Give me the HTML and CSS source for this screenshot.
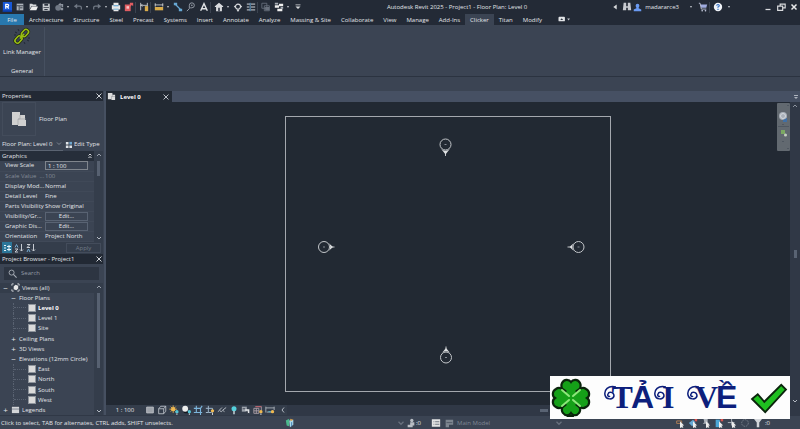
FILE: index.html
```html
<!DOCTYPE html>
<html lang="en">
<head>
    <meta charset="UTF-8">
    <meta name="viewport" content="width=device-width, initial-scale=1.0">
    <title>Autodesk Revit 2025 - Project1 - Floor Plan: Level 0</title>
    <link rel="stylesheet" href="styles.css">
</head>
<body>
    <header class="titlebar">
        <div class="quick-access">
            <button class="tool" aria-label="Revit"><svg viewBox="0 0 12 12"><path fill="#1858d8" d="M1 0h11v12H1z"/><path fill="#0b3aa0" d="M1 10h11v2H1z"/><path fill="none" stroke="#fff" stroke-width="1.5" d="M4.500 8V2.700h2a1.400 1.400 0 0 1 0 2.900h-2M6.500 5.600L8 8"/></svg></button>
            <button class="tool" aria-label="Home"><svg viewBox="0 0 12 12"><path fill="#aeb4bc" d="M2 2h8v8H2z"/><path stroke="#2a313d" d="M2 4.500h8M5 5v5M6 7h3"/></svg></button>
            <button class="tool" aria-label="Open"><svg viewBox="0 0 12 12"><path fill="#d5d7da" d="M2 2h3l1 1h4v2H4L2 9z"/><path fill="#efefef" d="M4.500 5.500H12L10 10H2z"/></svg></button>
            <button class="tool" aria-label="Save"><svg viewBox="0 0 12 12"><path fill="#c9ccd0" d="M2 2h8.500v8.500H2z"/><path fill="#303743" d="M4 2.500h4.500v2H4zM3 6h6.500v1H3zM4 8.500h4v1H4z"/></svg></button>
            <button class="tool" aria-label="Synchronize"><svg viewBox="0 0 12 12"><circle cx="5" cy="7" r="3.500" fill="#707884"/><path fill="#8c939e" d="M5 3l3-2v1.500h3V6H9V4H8v1zM8 7h3v3H8z"/></svg></button>
            <span class="caret"></span>
            <button class="tool" aria-label="Undo"><svg viewBox="0 0 12 12"><path fill="none" stroke="#707884" stroke-width="1.500" d="M10 9V6.500Q10 5 8 5H4"/><path fill="#707884" d="M5 2v6L1 5z"/></svg></button>
            <span class="caret"></span>
            <button class="tool" aria-label="Redo"><svg viewBox="0 0 12 12"><path fill="none" stroke="#707884" stroke-width="1.500" d="M2 9V6.500Q2 5 4 5h4"/><path fill="#707884" d="M7 2v6l4-3z"/></svg></button>
            <span class="caret"></span>
            <button class="tool" aria-label="Print"><svg viewBox="0 0 12 12"><path fill="#e8e8e8" d="M3 1h6v3h2v5H9v2H3V9H1V4h2z"/><path fill="#4d9bd0" d="M3 4h6v1H3zM3 8h6v1H3z"/></svg></button>
            <button class="tool" aria-label="Export PDF"><svg viewBox="0 0 12 12"><path fill="#e05d62" d="M1 3h7v8H1z"/><path fill="#f4c5c7" d="M3 5h3v3H3z"/><path fill="#e05d62" d="M7 1h4v4L9.500 3.500 7 6z"/></svg></button>
            <span class="sep"></span>
            <button class="tool" aria-label="Measure"><svg viewBox="0 0 12 12"><path fill="none" stroke="#d2d5d9" d="M2 1v9M10 1v5M2 4h8M4 2.500L2.500 4 4 5.500"/><path fill="#d9ac4b" d="M7 5h4v6H7z"/></svg></button>
            <span class="sep"></span>
            <button class="tool" aria-label="Aligned dimension"><svg viewBox="0 0 12 12"><path stroke="#d2d5d9" d="M1 3.500h10M1.500 1.500v4M10.500 1.500v4"/><path fill="#d9ac4b" d="M1 6h10v4H1z"/></svg></button>
            <span class="caret"></span>
            <button class="tool" aria-label="Tag"><svg viewBox="0 0 12 12"><path stroke="#67a8d4" stroke-width="1.500" d="M3 3l6 6"/><path fill="#67a8d4" d="M1 1h4v3H1zM7 8h4v3H7z"/></svg></button>
            <button class="tool" aria-label="Detail"><svg viewBox="0 0 12 12"><path fill="none" stroke="#9299a4" stroke-width="1.200" d="M1 11l3-3V4a3 3 0 1 1 3 3H5"/><circle cx="7" cy="4" r="1" fill="#9299a4"/></svg></button>
            <button class="tool" aria-label="Text"><svg viewBox="0 0 12 12"><path fill="none" stroke="#e0e2e4" stroke-width="1.700" d="M2 10.500L6 2l4 8.500M3.500 8h5"/></svg></button>
            <span class="sep"></span>
            <button class="tool" aria-label="3D view"><svg viewBox="0 0 12 12"><path fill="#d9dbde" d="M1 5l5-4 5 4v1H9.500v5h-7V6H1z"/><path fill="#353c49" d="M5 7h2v4H5z"/></svg></button>
            <span class="caret"></span>
            <button class="tool" aria-label="Section"><svg viewBox="0 0 12 12"><circle cx="6" cy="5.500" r="3" fill="none" stroke="#d9dbde" stroke-width="1.300"/><path fill="#d9dbde" d="M1 5.500l2-2v4zM11 5.500l-2-2v4zM4 9h4l-2 3z"/></svg></button>
            <button class="tool" aria-label="Thin lines"><svg viewBox="0 0 12 12"><path stroke="#d0d3d7" stroke-width="1.200" d="M1 2.500h4M6 2.500h5M1 6h3M6 6h5M1 9.500h4M6 9.500h5"/><path stroke="#5f9dc9" stroke-width="1.200" d="M5 1v10"/></svg></button>
            <span class="sep"></span>
            <button class="tool" aria-label="Close inactive views"><svg viewBox="0 0 12 12"><path fill="none" stroke="#69717e" d="M1 1.500h6v6H1zM4 4.500h6v6H4z"/><path fill="#69717e" d="M5 6h5v4H5z"/></svg></button>
            <button class="tool" aria-label="Switch windows"><svg viewBox="0 0 12 12"><path fill="#f0f0f0" d="M1 4h5v3H1zM6 2h5v3H6zM4 8h6v3H4z"/><path fill="#aab0b8" d="M1 1h4v2H1zM8 6h3v2H8z"/></svg></button>
            <span class="caret"></span>
            <button class="tool" aria-label="Customize"><svg viewBox="0 0 12 12"><path fill="#d9dbde" d="M3 3h6v1H3zM3 5.500h6l-3 3z"/></svg></button>
        </div>
        <div class="title">Autodesk Revit 2025 - Project1 - Floor Plan: Level 0</div>
        <div class="account">
            <svg class="icon" viewBox="0 0 12 12"><path fill="#d9dbde" d="M8 3v6L4 6z"/></svg>
            <button class="tool" aria-label="Search"><svg viewBox="0 0 12 12"><path fill="#c7cad0" d="M2 1h3v4h2V1h3l1 9H7V7H5v3H1z"/></svg></button>
            <button class="user"><svg viewBox="0 0 12 12"><circle cx="6" cy="3.500" r="2.500" fill="#6a9af2"/><path fill="#6a9af2" d="M4.500 5h3v2L11 8.500V11H1V8.500L4.500 7z"/></svg>madararce3</button>
            <span class="caret"></span>
            <button class="tool" aria-label="Store"><svg viewBox="0 0 12 12"><path fill="#9fabe0" d="M3 3h8l-1 4H4z"/><path fill="none" stroke="#cdd2e6" d="M1 1.500h1.500L4 8.500h6"/><circle cx="5" cy="10.500" r="1" fill="#cdd2e6"/><circle cx="9" cy="10.500" r="1" fill="#cdd2e6"/></svg></button>
            <span class="sep"></span>
            <button class="tool" aria-label="Help"><svg viewBox="0 0 12 12"><circle cx="6" cy="6" r="5" fill="#f0f3f8"/><path fill="none" stroke="#2d6cc4" stroke-width="1.400" d="M4.500 4.500Q4.500 3 6 3t1.500 1.500Q7.500 5.500 6 6v1M6 8v1.500"/></svg></button>
            <span class="caret"></span>
        </div>
        <div class="window-buttons">
            <button class="tool" aria-label="Minimize"><svg viewBox="0 0 12 12"><path stroke="#d9dbde" stroke-width="1.500" d="M3 9h6"/></svg></button>
            <button class="tool" aria-label="Restore"><svg viewBox="0 0 12 12"><path fill="none" stroke="#d9dbde" stroke-width="1.400" d="M2 5h6v5H2zM5 5V2.500h6V7H8"/></svg></button>
            <button class="tool" aria-label="Close"><svg viewBox="0 0 12 12"><path stroke="#e8e9eb" stroke-width="1.800" d="M3 3l6 6M9 3L3 9"/></svg></button>
        </div>
    </header>

    <nav class="tabs">
        <a class="file" href="#">File</a>
        <a href="#">Architecture</a>
        <a href="#">Structure</a>
        <a href="#">Steel</a>
        <a href="#">Precast</a>
        <a href="#">Systems</a>
        <a href="#">Insert</a>
        <a href="#">Annotate</a>
        <a href="#">Analyze</a>
        <a href="#">Massing &amp; Site</a>
        <a href="#">Collaborate</a>
        <a href="#">View</a>
        <a href="#">Manage</a>
        <a href="#">Add-Ins</a>
        <a class="active" href="#">Clicker</a>
        <a href="#">Titan</a>
        <a href="#">Modify</a>
        <button class="ribbon-toggle" aria-label="Minimize ribbon"><svg viewBox="0 0 14 12"><rect x="1" y="3" width="7" height="5" rx="1" fill="#e2e4e7"/><path fill="#2a313d" d="M3 6.500h3l-1.500-2z"/><path fill="#c6c9ce" d="M10.500 5h3l-1.500 2z"/></svg></button>
    </nav>

    <section class="ribbon">
        <div class="ribbon-panel">
            <button class="link-manager">
                <svg viewBox="0 0 20 20"><g fill="none" stroke="#1e2618" stroke-width="3"><rect x="-4" y="-2.500" width="8" height="5" rx="2.500" transform="translate(6.500 12.500) rotate(-48)"/><rect x="-4" y="-2.500" width="8" height="5" rx="2.500" transform="translate(13 6) rotate(-48)"/></g><g fill="none" stroke="#9abf12" stroke-width="1.600"><rect x="-4" y="-2.500" width="8" height="5" rx="2.500" transform="translate(6.500 12.500) rotate(-48)"/><rect x="-4" y="-2.500" width="8" height="5" rx="2.500" transform="translate(13 6) rotate(-48)"/><path d="M8 11.500l4-4.500"/></g><path stroke="#202735" d="M6 2l1 2M3 5l2 1M2 8h2M13 17l-1-2M17 14l-2-1M18 11h-2"/></svg>
                <span>Link Manager</span>
            </button>
            <div class="panel-name">General</div>
        </div>
    </section>
    <div class="options-bar"></div>

    <main class="workspace">
        <aside class="sidebar">
            <section class="properties">
                <h2 class="palette-title">Properties <button class="close" aria-label="Close properties"><svg viewBox="0 0 8 8"><path stroke="#cfd2d7" d="M1.500 1.500l5 5M6.500 1.500l-5 5"/></svg></button></h2>
                <div class="type-selector">
                    <div class="thumb"><svg viewBox="0 0 18 18"><path fill="#d0d0d0" d="M2 2h8v3h5v5h1v6H8v-1H2z"/><path fill="none" stroke="#9a9da1" stroke-width=".6" d="M10 5v4H8v6M8 9h8"/></svg></div>
                    <span>Floor Plan</span>
                </div>
                <div class="filter-row">
                    <select class="filter" aria-label="Element filter"><option>Floor Plan: Level 0</option></select>
                    <svg class="chevron" viewBox="0 0 8 8"><path fill="none" stroke="#7f8793" d="M2 3l2 2 2-2"/></svg>
                    <button class="edit-type"><svg viewBox="0 0 8 8"><path fill="#dfe3e8" d="M1 1h3v3H1zM1 5h3v3H1zM5 5h3v3H5z"/><path fill="#6ea6ce" d="M5 1h3v3H5z"/></svg>Edit Type</button>
                </div>
                <div class="property-box">
                    <div class="property-list">
                        <h3 class="group-title">Graphics <svg viewBox="0 0 8 8"><path fill="none" stroke="#d5d8dc" d="M2.500 3.500L4 2l1.500 1.500M2.500 6L4 4.500 5.500 6"/></svg></h3>
                        <table class="property-table">
                            <tr><th><label for="scale">View Scale</label></th><td><input id="scale" type="text" value="1 : 100"></td></tr>
                            <tr class="muted"><th>Scale Value &nbsp;...</th><td>100</td></tr>
                            <tr><th>Display Mod...</th><td>Normal</td></tr>
                            <tr><th>Detail Level</th><td>Fine</td></tr>
                            <tr><th>Parts Visibility</th><td>Show Original</td></tr>
                            <tr><th>Visibility/Gr...</th><td><button class="edit">Edit...</button></td></tr>
                            <tr><th>Graphic Dis...</th><td><button class="edit">Edit...</button></td></tr>
                            <tr><th>Orientation</th><td>Project North</td></tr>
                        </table>
                    </div>
                    <div class="scroll">
                        <svg viewBox="0 0 8 8"><path fill="none" stroke="#9ba2ad" d="M2 5l2-2 2 2"/></svg>
                        <div class="scroll-track"><div class="scroll-thumb short"></div></div>
                        <svg viewBox="0 0 8 8"><path fill="none" stroke="#b3b9c2" d="M2 3l2 2 2-2"/></svg>
                    </div>
                </div>
                <div class="property-footer">
                    <button class="sort on" aria-label="Group"><svg viewBox="0 0 10 10"><path stroke="#e7f2f8" d="M2 2.500h2M2 5h2M2 7.500h2M5 3.500h4M5 6.500h4M7 2v6"/></svg></button>
                    <button class="sort" aria-label="Sort ascending"><svg viewBox="0 0 10 10"><path fill="none" stroke="#75abd0" d="M1 4.500l1.500-3L4 4.500"/><path fill="none" stroke="#c5cad1" d="M1 6h3L1 9h3M7.500 1v7M6 6.500L7.500 8 9 6.500"/></svg></button>
                    <button class="sort" aria-label="Sort descending"><svg viewBox="0 0 10 10"><path fill="none" stroke="#c5cad1" d="M1 1.500h3L1 4.500h3M7.500 1v7M6 6.500L7.500 8 9 6.500"/><path fill="none" stroke="#75abd0" d="M1 9l1.500-3L4 9"/></svg></button>
                    <button class="apply" disabled>Apply</button>
                </div>
            </section>

            <section class="browser">
                <h2 class="palette-title">Project Browser - Project1 <button class="close" aria-label="Close browser"><svg viewBox="0 0 8 8"><path stroke="#cfd2d7" d="M1.500 1.500l5 5M6.500 1.500l-5 5"/></svg></button></h2>
                <label class="search"><svg viewBox="0 0 10 10"><circle cx="4" cy="4" r="2.800" fill="none" stroke="#aab0b9"/><path stroke="#aab0b9" stroke-width="1.200" d="M6 6l3.500 3.500"/></svg><input type="text" placeholder="Search" aria-label="Search"></label>
                <div class="tree-box">
                    <ul class="tree">
                        <li class="root"><i>−</i><svg viewBox="0 0 10 10"><path fill="none" stroke="#d5d8dc" d="M1 3V1h2M7 1h2v2M9 7v2H7M3 9H1V7"/><path fill="#e8e8e8" d="M3 4l2-2 3 1v3L6 8 3 7z"/></svg>Views (all)</li>
                        <li class="branch"><i>−</i>Floor Plans</li>
                        <li class="leaf current"><b></b>Level 0</li>
                        <li class="leaf"><b></b>Level 1</li>
                        <li class="leaf"><b></b>Site</li>
                        <li class="branch"><i>+</i>Ceiling Plans</li>
                        <li class="branch"><i>+</i>3D Views</li>
                        <li class="branch"><i>−</i>Elevations (12mm Circle)</li>
                        <li class="leaf"><b></b>East</li>
                        <li class="leaf"><b></b>North</li>
                        <li class="leaf"><b></b>South</li>
                        <li class="leaf"><b></b>West</li>
                        <li class="last"><i>+</i><svg viewBox="0 0 10 10"><path fill="#d4d6d9" d="M1 2h8v7H1z"/><path stroke="#7c838e" d="M1 4.500h8"/></svg>Legends</li>
                    </ul>
                    <div class="scroll">
                        <svg viewBox="0 0 8 8"><path fill="none" stroke="#9ba2ad" d="M2 5l2-2 2 2"/></svg>
                        <div class="scroll-track"><div class="scroll-thumb"></div></div>
                        <svg viewBox="0 0 8 8"><path fill="none" stroke="#b3b9c2" d="M2 3l2 2 2-2"/></svg>
                    </div>
                </div>
            </section>
        </aside>

        <section class="view">
            <div class="view-tabs">
                <div class="view-tab">
                    <svg viewBox="0 0 10 10"><path fill="#dcdcdc" d="M1 1h5v2h3v6H5V8H1z"/><path fill="none" stroke="#9a9da1" stroke-width=".6" d="M6 3v2H5v3M5 5h4"/></svg>
                    <span>Level 0</span>
                    <button class="close" aria-label="Close view"><svg viewBox="0 0 8 8"><path stroke="#b9bec6" d="M1.500 1.500l5 5M6.500 1.500l-5 5"/></svg></button>
                </div>
                <svg class="tab-menu" viewBox="0 0 8 8"><path fill="#aeb4be" d="M2 2h4v1H2zM2 4h4L4 6z"/></svg>
            </div>
            <div class="canvas-row">
                <div class="canvas">
                    <svg class="drawing" viewBox="0 0 684 303">
                        <rect x="179.500" y="14.500" width="325" height="275" fill="none" stroke="#a4a8ae"/>
                        <g fill="none" stroke="#c3c6ca">
                            <circle cx="339.500" cy="42.500" r="5.500"/>
                            <circle cx="218" cy="145" r="5.500"/>
                            <circle cx="472.500" cy="145" r="5.500"/>
                            <circle cx="340" cy="255.500" r="5.500"/>
                            <path d="M339.500 51v3M226 145h2.500M461.500 145h3M340 244.500v3"/>
                        </g>
                        <g fill="#dfe1e3">
                            <path d="M334.500 46l5 6.500 5-6.500a6 6 0 0 1-10 0z"/>
                            <path d="M221.500 140l5.500 5-5.500 5a6 6 0 0 0 0-10z"/>
                            <path d="M469 140l-5.500 5 5.500 5a6 6 0 0 1 0-10z"/>
                            <path d="M335 252l5-6 5 6a6 6 0 0 0-10 0z"/>
                        </g>
                        <path stroke="#858b94" d="M338.500 42.500h2M217 145h2M471.500 145h2M339 255.500h2"/>
                    </svg>
                    <div class="nav-bar">
                        <svg viewBox="0 0 13 48"><circle cx="6" cy="13" r="4" fill="#a9b0b8"/><circle cx="6" cy="13" r="2.500" fill="none" stroke="#d4d8dd"/><path fill="#3f6fa6" d="M6 17l4-2v4H6z"/><path stroke="#4f5761" d="M1 23.500h11M5 21.500h2M5 38.500h2M10 2.500h2M10 45.500h2"/><path fill="#7ca963" d="M4 27h4v4H4z"/><circle cx="8.500" cy="32" r="1.500" fill="#c4cfc0"/></svg>
                    </div>
                </div>
                <div class="scroll wide">
                    <svg viewBox="0 0 8 8"><path fill="none" stroke="#8b929d" d="M2 5l2-2 2 2"/></svg>
                    <div class="scroll-track centered"><div class="scroll-mark"></div></div>
                    <svg viewBox="0 0 8 8"><path fill="none" stroke="#b3b9c2" d="M2 3l2 2 2-2"/></svg>
                </div>
            </div>
            <div class="view-controls">
                <button class="scale">1 : 100</button>
                <button class="tool" aria-label="Detail level"><svg viewBox="0 0 12 12"><path fill="#9ea3ab" stroke="#c4c7cc" d="M2 2.500h8v7H2z"/></svg></button>
                <button class="tool" aria-label="Visual style"><svg viewBox="0 0 12 12"><path fill="none" stroke="#bfc4cb" d="M2 4.500h6v6H2zM2 4.500l2.500-3h6L8 4.500M10.500 1.500v6L8 10.500"/></svg></button>
                <button class="tool" aria-label="Sun path"><svg viewBox="0 0 12 12"><circle cx="5" cy="5" r="2.500" fill="#efb951"/><path stroke="#efb951" d="M5 .500v9M.500 5h9M2 2l6 6M8 2L2 8"/><circle cx="9.500" cy="8" r="2" fill="#54c5d8"/><path stroke="#e2e4e7" d="M9.500 10v2"/></svg></button>
                <button class="tool" aria-label="Shadows"><svg viewBox="0 0 12 12"><ellipse cx="7" cy="8.500" rx="4" ry="1.500" fill="#11161e"/><circle cx="5" cy="4.500" r="3.500" fill="#ededed"/><circle cx="10" cy="8" r="2" fill="#54c5d8"/><path stroke="#e2e4e7" d="M10 10v2"/></svg></button>
                <button class="tool" aria-label="Crop view"><svg viewBox="0 0 12 12"><path fill="none" stroke="#7cb5dc" stroke-width="1.300" d="M4 1v8h7M1 9h3M9 12V4H1M9 4l2-3"/></svg></button>
                <button class="tool" aria-label="Crop region"><svg viewBox="0 0 12 12"><path fill="none" stroke="#9db4c8" stroke-width="1.200" d="M4 1v8h4M1 9h3M9 6V4H1"/><circle cx="9" cy="7" r="2" fill="#efb951"/><path stroke="#e2e4e7" d="M9 9v3"/></svg></button>
                <button class="tool" aria-label="Temporary hide"><svg viewBox="0 0 12 12"><path fill="none" stroke="#aeb4bc" stroke-width="1.200" d="M1 8q2-3 4 0 2-3 4 0M3 6l3-3M7 6l4-3"/></svg></button>
                <button class="tool" aria-label="Reveal hidden"><svg viewBox="0 0 12 12"><circle cx="6" cy="4.500" r="3" fill="#54d0dc"/><path stroke="#d6e6e9" stroke-width="1.600" d="M6 7v4"/></svg></button>
                <button class="tool" aria-label="Worksharing"><svg viewBox="0 0 12 12"><path fill="#9da3ac" d="M1 2h6v6H1z"/><path fill="#e3e5e8" d="M5 5h5v5H8V7H5z"/><path stroke="#303744" d="M2 4.500h3M6 8l4 3"/></svg></button>
                <button class="tool" aria-label="Analytical model"><svg viewBox="0 0 12 12"><path fill="none" stroke="#b3a5ad" d="M1 4h6v6H1zM3 2h7v5M4 4v6M1 7h6"/><path stroke="#c9555f" d="M3 2h7"/><circle cx="9.500" cy="8" r="2" fill="#efb951"/><path stroke="#e2e4e7" d="M9.500 10v2"/></svg></button>
                <button class="tool" aria-label="Constraints"><svg viewBox="0 0 12 12"><path fill="none" stroke="#b5bac2" d="M1 2v7M11 2v4M1 3.500h10M2 8.500h6"/><circle cx="9" cy="8" r="2" fill="#efb951"/><path stroke="#54c5d8" d="M4 8h3"/></svg></button>
                <svg class="arrow" viewBox="0 0 8 8"><path fill="none" stroke="#b3b9c2" d="M5 1.500L3 4l2 2.500"/></svg>
                <div class="h-track"><div class="scroll-mark flat"></div></div>
            </div>
        </section>
    </main>

    <footer class="statusbar">
        <div class="hint">Click to select, TAB for alternates, CTRL adds, SHIFT unselects.</div>
        <svg class="icon" viewBox="0 0 12 12"><path fill="#4bb98c" d="M1 3l4-2v9L2 9z"/><path fill="#a9d8ea" d="M5 3l5-1v6l-4 3z"/><path fill="#e3a64b" d="M6 1l4 1-3 2z"/><path stroke="#2f6ea5" d="M8 5v5"/></svg>
        <div class="workset">
            <svg class="icon" viewBox="0 0 8 8"><path fill="none" stroke="#69717e" d="M2 3l2 2 2-2"/></svg>
            <svg class="icon" viewBox="0 0 12 12"><circle cx="7" cy="3" r="2" fill="#b8bdc4"/><path fill="#b8bdc4" d="M5 5h5v4H8v2H2V8h3z"/></svg>
            <span>:0</span>
        </div>
        <div class="design-option">
            <svg class="icon" viewBox="0 0 12 12"><path fill="#e3e3e3" d="M1 1.500h10v9H1z"/><path stroke="#59616e" d="M3 4.500h1M5 4.500h5M3 7.500h1M5 7.500h5"/></svg>
            <svg class="icon" viewBox="0 0 12 12"><path fill="#7d858f" d="M2 2h9v6H6v3H2z"/><path stroke="#4e5663" d="M3 5.500h7"/></svg>
            <span>Main Model</span>
        </div>
        <svg class="icon" viewBox="0 0 8 8"><path fill="none" stroke="#69717e" d="M2 3l2 2 2-2"/></svg>
        <div class="selection-tools">
            <button class="tool" aria-label="Select links"><svg viewBox="0 0 12 12"><path fill="none" stroke="#bd8455" d="M2 3.500h6v3H2z"/><path fill="#eee" d="M6 4l5 5H9l1 3-2-1-2 1z"/></svg></button>
            <button class="tool" aria-label="Select underlay"><svg viewBox="0 0 12 12"><path fill="#67a8d4" d="M1 6l5-4 3 3-4 5z"/><path fill="#d9534f" d="M8 1h3v3H8z"/><path fill="#eee" d="M6 4l5 5H9l1 3-2-1-2 1z"/></svg></button>
            <button class="tool" aria-label="Select pinned"><svg viewBox="0 0 12 12"><path fill="#aeb4bc" d="M3 1h5v4l2 2H2l2-2z"/><path fill="#eee" d="M6 4l5 5H9l1 3-2-1-2 1z"/></svg></button>
            <button class="tool" aria-label="Select by face"><svg viewBox="0 0 12 12"><path fill="#4ba6d6" d="M2 2h5v9H2z"/><path fill="#d9534f" d="M8 1h3v3H8z"/><path fill="#eee" d="M6 4l5 5H9l1 3-2-1-2 1z"/></svg></button>
            <button class="tool" aria-label="Drag elements"><svg viewBox="0 0 12 12"><path stroke="#bfc4cb" d="M1 5.500h8M5.500 1v8"/><path fill="#eee" d="M6 4l5 5H9l1 3-2-1-2 1z"/></svg></button>
            <button class="tool" aria-label="Background processes"><svg viewBox="0 0 12 12"><circle cx="6" cy="6" r="4" fill="none" stroke="#7d8590" stroke-dasharray="2 1"/></svg></button>
            <button class="tool" aria-label="Filter"><svg viewBox="0 0 12 12"><path fill="#d3d6da" d="M1 1h10L7.500 5.500V11h-3V5.500z"/></svg></button>
            <span>:0</span>
        </div>
    </footer>

    <a class="download" href="#" aria-label="Tải về">
        <svg class="clover" viewBox="0 0 40 40"><g stroke="#0b240c" stroke-width="2.200" fill="#15a018"><path d="M18 27q1 6-1 11h5q2-5-1-11z"/><path d="M20 20C12 15 9 9 11 5c2-4 7-4 9-1 2-3 7-3 9 1 2 4-1 10-9 15z"/><path d="M20 20C12 25 9 31 12 35c2 3 6 3 8 0 2 3 6 3 8 0 3-4 0-10-8-15z"/><path d="M20 20C15 12 9 8 5 11c-4 2-4 7-1 9-3 2-3 7 1 9 4 3 10-1 15-9z"/><path d="M20 20c5-8 11-12 15-9 4 2 4 7 1 9 3 2 3 7-1 9-4 3-10-1-15-9z"/></g><path fill="#15a018" d="M20 9l11 11-11 11L9 20z"/><path stroke="#8ee67b" stroke-width="2" stroke-linecap="round" d="M11 12l7 6M29 12l-7 6M11 28l7-6M29 28l-7-6"/></svg>
        <span class="word">
            <svg class="curl" viewBox="0 0 12 26"><path fill="none" stroke="#0d1f7c" stroke-width="1.500" d="M12 2C4 0 0 5 1 10c1 5 8 5 9 1 0-4-5-5-6-2-1 2 1 3 2 2"/></svg><span class="serif">T</span><span class="plain">Ả</span><svg class="curl" viewBox="0 0 12 26"><path fill="none" stroke="#0d1f7c" stroke-width="1.500" d="M12 2C4 0 0 5 1 10c1 5 8 5 9 1 0-4-5-5-6-2-1 2 1 3 2 2"/></svg><span class="serif">I</span>
        </span>
        <span class="word">
            <svg class="curl" viewBox="0 0 12 26"><path fill="none" stroke="#0d1f7c" stroke-width="1.500" d="M12 2C4 0 0 5 1 10c1 5 8 5 9 1 0-4-5-5-6-2-1 2 1 3 2 2"/></svg><span class="serif">V</span><span class="plain">Ề</span>
        </span>
        <svg class="check" viewBox="0 0 40 34"><path fill="#1fbf20" stroke="#0b240c" stroke-width="2" d="M2 18l6-5 7 8L33 3l5 5-22 24z"/></svg>
    </a>
</body>
</html>
```
FILE: styles.css
```css
* {
    box-sizing: border-box;
}

body {
    margin: 0;
    height: 100vh;
    display: flex;
    flex-direction: column;
    overflow: hidden;
    background-color: #3b4453;
    color: #e2e5e9;
    font-family: "Open Sans", "Noto Sans", sans-serif;
    font-size: 6px;
    line-height: 10px;
}

button, input, select {
    margin: 0;
    padding: 0;
    border: none;
    background: none;
    color: inherit;
    font: inherit;
}

a {
    color: inherit;
    text-decoration: none;
}

svg {
    display: block;
    flex: none;
}

h2, h3, ul {
    margin: 0;
    padding: 0;
    font-size: 6px;
    font-weight: normal;
}

/* Title bar */
.titlebar {
    display: flex;
    align-items: center;
    height: 14px;
    background-color: #232a36;
}

.quick-access, .account, .window-buttons {
    display: flex;
    align-items: center;
}

.title {
    flex: 1;
    text-align: center;
    white-space: nowrap;
}

.tool {
    width: 13px;
    height: 12px;
    display: flex;
    flex: none;
    align-items: center;
    justify-content: center;
}

.tool svg {
    width: 10px;
    height: 10px;
}

.icon {
    width: 10px;
    height: 10px;
}

.caret {
    width: 6px;
    display: flex;
    justify-content: center;
}

.caret::before {
    content: "";
    border: 1px solid transparent;
    border-top: 2px solid #c5c9cf;
    border-bottom: none;
}

.sep {
    width: 1px;
    height: 11px;
    margin: 0 1px 0 0;
    background-color: #3b4350;
}

.user {
    display: flex;
    align-items: center;
    gap: 3px;
}

.user svg {
    width: 9px;
    height: 9px;
}

.account .caret {
    margin: 0 2px;
}

.user + .caret {
    margin-left: 9px;
}

.window-buttons {
    margin-left: 27px;
}

/* Ribbon */
.tabs {
    display: flex;
    height: 11px;
    line-height: 12px;
    background-color: #232a36;
}

.tabs a {
    padding: 0 5px;
    white-space: nowrap;
}

.tabs .file {
    width: 24px;
    text-align: center;
    background-color: #2878ae;
}

.tabs .active {
    background-color: #3b4453;
}

.ribbon-toggle {
    margin-left: 10px;
}

.ribbon-toggle svg {
    width: 14px;
    height: 11px;
}

.ribbon {
    display: flex;
    height: 52px;
    border-bottom: 1px solid #2b3340;
}

.ribbon-panel {
    display: flex;
    flex-direction: column;
    align-items: center;
    justify-content: space-between;
    width: 45px;
    margin: 2px 0 0;
    border-right: 1px solid #465060;
}

.link-manager {
    display: flex;
    flex-direction: column;
    align-items: center;
    white-space: nowrap;
}

.link-manager svg {
    width: 20px;
    height: 20px;
}

.panel-name {
    line-height: 10px;
}

.options-bar {
    height: 14px;
}

/* Side palettes */
.workspace {
    display: flex;
    flex: 1;
    min-height: 0;
}

.sidebar {
    display: flex;
    flex-direction: column;
    width: 106px;
    padding-right: 1px;
    border-right: 2px solid #465061;
}

.palette-title {
    display: flex;
    align-items: center;
    justify-content: space-between;
    height: 10px;
    padding: 0 0 0 2px;
    background-color: #222934;
    white-space: nowrap;
}

.close svg {
    width: 8px;
    height: 8px;
}

.type-selector {
    display: flex;
    align-items: center;
    gap: 3px;
    height: 36px;
    padding-left: 2px;
}

.thumb {
    display: flex;
    align-items: center;
    justify-content: center;
    width: 34px;
    height: 34px;
    border: 1px solid #434c5b;
}

.thumb svg {
    width: 18px;
    height: 18px;
}

.filter-row {
    display: flex;
    align-items: center;
    height: 14px;
}

.filter {
    width: 55px;
    height: 14px;
    padding-left: 2px;
    appearance: none;
    border-bottom: 1px solid #5b6472;
}

.chevron {
    width: 8px;
    height: 14px;
    border-bottom: 1px solid #5b6472;
}

.edit-type {
    display: flex;
    align-items: center;
    gap: 2px;
    margin-left: 2px;
    white-space: nowrap;
}

.edit-type svg {
    width: 7px;
    height: 7px;
}

.property-box {
    display: flex;
}

.property-list {
    flex: 1;
    min-width: 0;
}

.group-title {
    display: flex;
    align-items: center;
    justify-content: space-between;
    padding: 0 0 0 2px;
    background-color: #262e3a;
}

.group-title svg {
    width: 8px;
    height: 8px;
}

.property-table {
    width: 100%;
    border-collapse: collapse;
    table-layout: fixed;
    line-height: 9px;
}

.property-table tr {
    height: 10px;
}

.property-table th,
.property-table td {
    padding: 0;
    height: 10px;
    border-bottom: 1px solid #404958;
    white-space: nowrap;
    text-align: left;
    font-weight: normal;
}

.property-table th {
    width: 45px;
    padding-left: 5px;
}

.property-table input,
.property-table .edit {
    display: block;
    width: 43px;
    height: 9px;
    border: 1px solid #596373;
    line-height: 7px;
}

.property-table input {
    padding-left: 2px;
    border-color: #7f858d;
}

.muted {
    color: #858c98;
}

.scroll {
    display: flex;
    flex-direction: column;
    align-items: center;
    width: 9px;
    background-color: #343d4b;
}

.scroll svg {
    width: 8px;
    height: 8px;
}

.scroll-track {
    flex: 1;
}

.scroll-thumb {
    width: 3px;
    height: 65%;
    margin-top: 2px;
    background-color: #576171;
}

.scroll-thumb.short {
    height: 20%;
}

.property-footer {
    display: flex;
    align-items: center;
    gap: 2px;
    height: 12px;
    padding: 0 2px;
    background-color: #343d4b;
}

.sort {
    width: 10px;
    height: 11px;
}

.sort svg {
    width: 10px;
    height: 10px;
}

.sort.on {
    background-color: #2b7699;
}

.apply {
    width: 35px;
    height: 10px;
    margin-left: auto;
    border: 1px solid #434c5b;
    line-height: 8px;
    color: #737b87;
}

.browser {
    display: flex;
    flex-direction: column;
    flex: 1;
    min-height: 0;
}

.search {
    display: flex;
    align-items: center;
    gap: 4px;
    height: 13px;
    margin: 3px 4px;
    padding: 0 4px;
    background-color: #2d3542;
}

.search svg {
    width: 9px;
    height: 9px;
}

.search input {
    width: 100%;
    min-width: 0;
}

.search input::placeholder {
    color: #949ba6;
}

.tree-box {
    display: flex;
    flex: 1;
    min-height: 0;
}

.tree {
    display: grid;
    grid-template-rows: repeat(13, 1fr);
    flex: 1;
    min-width: 0;
    list-style: none;
}

.tree li {
    display: flex;
    align-items: center;
    gap: 2px;
    min-height: 0;
    white-space: nowrap;
}

.tree i {
    width: 7px;
    font-size: 8px;
    font-style: normal;
    line-height: 8px;
    text-align: center;
}

.tree svg {
    width: 9px;
    height: 9px;
}

.tree .root,
.tree .last {
    padding-left: 2px;
}

.tree .root {
    background-color: #343d4b;
}

.tree .branch {
    padding-left: 10px;
}

.tree .leaf {
    margin-left: 13px;
    border-left: 1px dotted #596271;
}

.tree .leaf::before {
    content: "";
    width: 12px;
    border-top: 1px dotted #596271;
}

.tree .leaf b {
    width: 8px;
    height: 8px;
    border: 1px solid #8e949c;
    background-color: #dadada;
}

.tree .current {
    color: #fff;
    font-weight: bold;
}

/* Drawing view */
.view {
    display: flex;
    flex-direction: column;
    flex: 1;
    min-width: 0;
}

.view-tabs {
    display: flex;
    align-items: center;
    justify-content: space-between;
    height: 11px;
    background-color: #465063;
}

.view-tab {
    display: flex;
    align-items: center;
    gap: 4px;
    width: 66px;
    height: 11px;
    padding: 0 2px 0 1px;
    background-color: #222933;
    color: #fff;
    font-weight: bold;
}

.view-tab > svg {
    width: 9px;
    height: 9px;
}

.view-tab .close {
    margin-left: auto;
}

.tab-menu {
    width: 8px;
    height: 8px;
}

.canvas-row {
    display: flex;
    flex: 1;
    min-height: 0;
}

.canvas {
    position: relative;
    flex: 1;
    min-width: 0;
    background-color: #222933;
}

.drawing {
    width: 100%;
    height: 100%;
}

.nav-bar {
    position: absolute;
    top: 1px;
    right: 0;
    width: 13px;
    background-color: #626970;
    border-radius: 1px;
}

.nav-bar svg {
    width: 100%;
}

.scroll.wide {
    width: 10px;
    background-color: #303846;
}

.scroll-track.centered {
    display: flex;
    align-items: center;
}

.scroll-mark {
    width: 3px;
    height: 8px;
    background-color: #596373;
}

.scroll-mark.flat {
    width: 8px;
    height: 3px;
}

.view-controls {
    display: flex;
    align-items: center;
    height: 10px;
    background-color: #343d4b;
}

.scale {
    width: 38px;
    text-align: center;
}

.view-controls .tool {
    width: 12px;
    height: 10px;
}

.view-controls .tool svg {
    width: 10px;
    height: 10px;
}

.arrow {
    width: 8px;
    height: 8px;
    margin-left: 3px;
}

.h-track {
    display: flex;
    flex: 1;
    align-items: center;
    justify-content: center;
    height: 10px;
    background-color: #303846;
}

/* Status bar */
.statusbar {
    display: flex;
    align-items: center;
    height: 14px;
    padding-left: 1px;
    border-top: 1px solid #303846;
}

.hint {
    width: 284px;
    white-space: nowrap;
}

.workset {
    display: flex;
    align-items: center;
    margin-left: 101px;
}

.design-option {
    display: flex;
    align-items: center;
    gap: 3px;
    width: 123px;
    margin-left: 10px;
    color: #7f8793;
}

.selection-tools {
    display: flex;
    align-items: center;
    margin: 0 30px 0 auto;
}

/* Download badge */
.download {
    position: absolute;
    right: 10px;
    bottom: 10px;
    display: flex;
    align-items: center;
    justify-content: space-between;
    width: 240px;
    height: 43px;
    padding: 0 2px 0 1px;
    background-color: #fdfdfd;
    color: #0d1f7c;
    font-size: 32px;
    font-weight: bold;
    line-height: 43px;
}

.clover {
    width: 40px;
    height: 40px;
}

.word {
    display: flex;
    align-items: center;
}

.curl {
    width: 12px;
    height: 26px;
    margin-right: -4px;
}

.serif {
    font-family: "Liberation Serif", serif;
}

.plain {
    margin-left: -2px;
    font-family: "Liberation Sans", sans-serif;
}

.check {
    width: 38px;
    height: 32px;
}
```
